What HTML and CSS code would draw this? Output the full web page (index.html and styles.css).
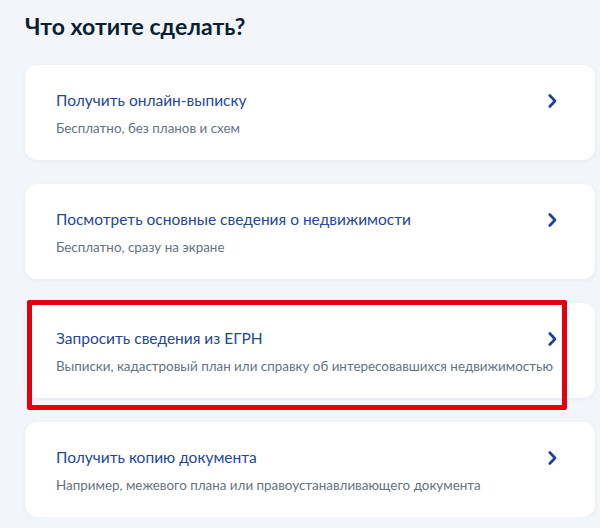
FILE: index.html
```html
<!DOCTYPE html>
<html lang="ru">
  <head>
    <meta charset="UTF-8" />
    <meta name="viewport" content="width=device-width, initial-scale=1.0" />
    <title>Что хотите сделать?</title>
    <link rel="stylesheet" href="styles.css">
  </head>
  <body>
    <main class="page">
      <h1 class="page-title">Что хотите сделать?</h1>

      <div class="options">
        <a href="#" class="option">
          <div class="option-text">
            <div class="option-title">Получить онлайн-выписку</div>
            <div class="option-desc">Бесплатно, без планов и схем</div>
          </div>
          <svg class="chevron" width="9" height="14" viewBox="0 0 9 14"><path d="M1.8 1.5 L7 7 L1.8 12.5" /></svg>
        </a>

        <a href="#" class="option">
          <div class="option-text">
            <div class="option-title">Посмотреть основные сведения о недвижимости</div>
            <div class="option-desc">Бесплатно, сразу на экране</div>
          </div>
          <svg class="chevron" width="9" height="14" viewBox="0 0 9 14"><path d="M1.8 1.5 L7 7 L1.8 12.5" /></svg>
        </a>

        <a href="#" class="option option-marked">
          <div class="option-text">
            <div class="option-title">Запросить сведения из ЕГРН</div>
            <div class="option-desc">Выписки, кадастровый план или справку об интересовавшихся недвижимостью</div>
          </div>
          <svg class="chevron" width="9" height="14" viewBox="0 0 9 14"><path d="M1.8 1.5 L7 7 L1.8 12.5" /></svg>
          <span class="marker"></span>
        </a>

        <a href="#" class="option">
          <div class="option-text">
            <div class="option-title">Получить копию документа</div>
            <div class="option-desc">Например, межевого плана или правоустанавливающего документа</div>
          </div>
          <svg class="chevron" width="9" height="14" viewBox="0 0 9 14"><path d="M1.8 1.5 L7 7 L1.8 12.5" /></svg>
        </a>
      </div>
    </main>
  </body>
</html>
```

FILE: styles.css
```css
* {
  margin: 0;
  padding: 0;
  box-sizing: border-box;
  font-family: Lato, "Liberation Sans", sans-serif;
}

body {
  background-color: #f2f5fa;
  overflow: hidden;
}

.page {
  padding: 12px 5px 0 25px;
}

.page-title {
  font-size: 23px;
  font-weight: bold;
  color: #0b1f33;
  line-height: 28px;
}

.options {
  display: flex;
  flex-direction: column;
  gap: 24px;
  margin-top: 25px;
}

.option {
  position: relative;
  display: flex;
  align-items: flex-start;
  height: 95px;
  padding: 25px 38px 0 31px;
  background-color: #ffffff;
  border-radius: 12px;
  box-shadow: 0 1px 4px rgba(11, 31, 51, 0.06);
  text-decoration: none;
}

.option-text {
  flex: 1;
  min-width: 0;
  white-space: nowrap;
}

.option-title {
  font-size: 15.5px;
  line-height: 20px;
  color: #23479a;
}

.option-desc {
  margin-top: 9px;
  font-size: 13.4px;
  line-height: 18px;
  color: #66727f;
}

.chevron {
  flex-shrink: 0;
  margin-top: 4px;
}

.chevron path {
  fill: none;
  stroke: #1c3f9c;
  stroke-width: 2.6;
  stroke-linecap: round;
  stroke-linejoin: round;
}

/* red annotation frame */
.marker {
  position: absolute;
  left: 2px;
  top: -3px;
  width: 540px;
  height: 110px;
  border: 5px solid #e4000f;
  border-radius: 2px;
}
```
